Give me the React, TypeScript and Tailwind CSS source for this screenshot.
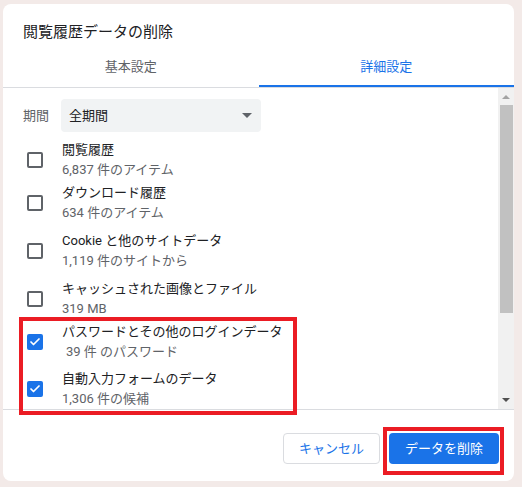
import { Check } from 'lucide-react'

type Item = { label: string; sub: string; checked: boolean; gap: string; subPad?: string }

const ITEMS: Item[] = [
  { label: '閲覧履歴', sub: '6,837 件のアイテム', checked: false, gap: 'mt-[8px]' },
  { label: 'ダウンロード履歴', sub: '634 件のアイテム', checked: false, gap: 'mt-[3px]' },
  { label: 'Cookie と他のサイトデータ', sub: '1,119 件のサイトから', checked: false, gap: 'mt-[8px]' },
  { label: 'キャッシュされた画像とファイル', sub: '319 MB', checked: false, gap: 'mt-[8px]' },
  { label: 'パスワードとその他のログインデータ', sub: '39 件 のパスワード', checked: true, gap: 'mt-[3px]', subPad: 'pl-[4px]' },
  { label: '自動入力フォームのデータ', sub: '1,306 件の候補', checked: true, gap: 'mt-[7px]' },
]

function Box({ checked }: { checked: boolean }) {
  if (checked) {
    return (
      <div className="w-[16px] h-[16px] rounded-[2px] bg-[#1a73e8] flex items-center justify-center flex-shrink-0">
        <Check className="w-[12px] h-[12px] text-white" strokeWidth={3.5} />
      </div>
    )
  }
  return <div className="w-[16px] h-[16px] rounded-[2px] border-2 border-[#5f6368] flex-shrink-0" />
}

export default function App() {
  return (
    <div className="w-[522px] h-[487px] bg-[#f3eae8] pt-[4px] pl-[3px] font-['Roboto','Noto_Sans_CJK_JP',sans-serif]">
      <div className="relative w-[511px] h-[477px] bg-white rounded-[8px] flex flex-col overflow-hidden">
        <h1 className="pt-[18px] pl-[20px] text-[15px] leading-[20px] text-[#202124]">閲覧履歴データの削除</h1>

        <div className="mt-[4px] flex border-b border-[#dadce0]">
          <div className="flex-1 h-[41px] flex items-center justify-center text-[13px] text-[#5f6368]">基本設定</div>
          <div className="flex-1 h-[41px] flex items-center justify-center text-[13px] text-[#1a73e8] border-b-2 border-[#1a73e8] pt-[2px]">詳細設定</div>
        </div>

        <div className="flex h-[322px] border-b border-[#dadce0]">
          <div className="flex-1 pt-[11px] overflow-hidden">
            <div className="flex items-center pl-[20px]">
              <span className="w-[38px] text-[13px] text-[#5f6368]">期間</span>
              <div className="w-[200px] h-[33px] rounded-[4px] bg-[#f1f3f4] flex items-center justify-between pl-[8px] pr-[9px]">
                <span className="text-[13px] text-[#202124]">全期間</span>
                <span className="w-0 h-0 border-l-[5px] border-r-[5px] border-t-[5px] border-l-transparent border-r-transparent border-t-[#5f6368]" />
              </div>
            </div>

            {ITEMS.map(item => (
              <div key={item.label} className={`${item.gap} h-[40px] flex items-center pl-[24px]`}>
                <Box checked={item.checked} />
                <div className="ml-[19px] flex flex-col">
                  <span className="text-[13px] leading-[20px] text-[#202124]">{item.label}</span>
                  <span className={`text-[13px] leading-[20px] text-[#5f6368] ${item.subPad ?? ''}`}>{item.sub}</span>
                </div>
              </div>
            ))}
          </div>

          {/* scrollbar */}
          <div className="w-[16px] bg-[#f1f1f1] flex flex-col items-center">
            <span className="mt-[7px] w-0 h-0 border-l-[4px] border-r-[4px] border-b-[4px] border-l-transparent border-r-transparent border-b-[#a3a3a3]" />
            <div className="mt-[6px] w-[13px] ml-[1px] h-[208px] bg-[#c1c1c1]" />
            <span className="mt-auto mb-[7px] w-0 h-0 border-l-[4px] border-r-[4px] border-t-[4px] border-l-transparent border-r-transparent border-t-[#505050]" />
          </div>
        </div>

        <div className="flex justify-end gap-[9px] pt-[23px] pr-[15px]">
          <button className="w-[97px] h-[31px] rounded-[4px] border border-[#dadce0] text-[13px] text-[#1a73e8] bg-white">キャンセル</button>
          <button className="w-[110px] h-[31px] rounded-[4px] bg-[#1a73e8] text-[13px] text-white">データを削除</button>
        </div>

        {/* highlight frames */}
        <div className="absolute left-[16px] top-[313px] w-[278px] h-[98px] border-[4px] border-[#eb1c24]" />
        <div className="absolute left-[380px] top-[423px] w-[121px] h-[48px] border-[4px] border-[#eb1c24]" />
      </div>
    </div>
  )
}
